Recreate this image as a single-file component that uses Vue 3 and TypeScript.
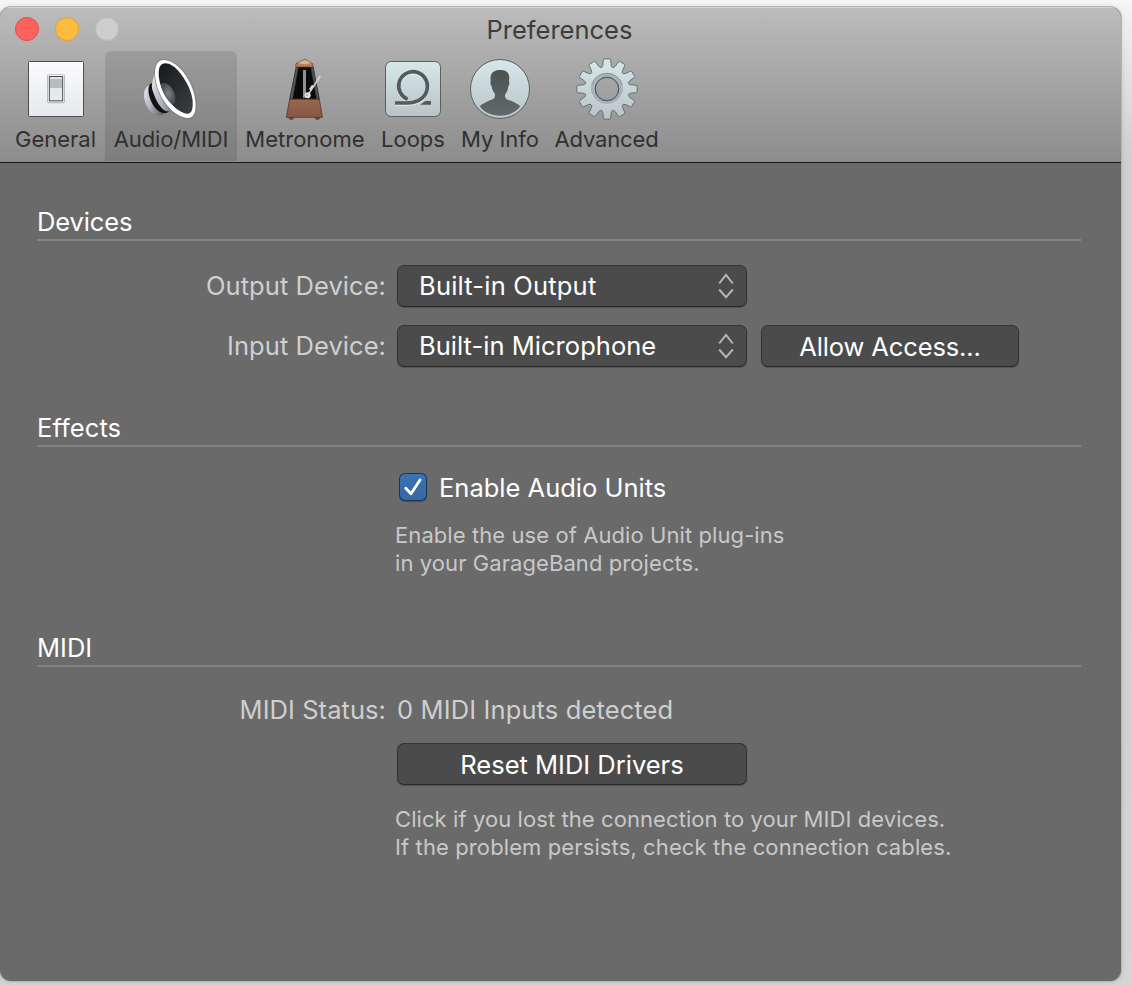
<script setup lang="ts">
import { ref } from 'vue'

interface Tab {
  id: string
  label: string
  width: number
  viewBox: string
}

const tabs: Tab[] = [
  { id: 'general', label: 'General', width: 98, viewBox: '72 168 192 198' },
  { id: 'audio', label: 'Audio/MIDI', width: 132, viewBox: '417 168 192 198' },
  { id: 'metronome', label: 'Metronome', width: 136, viewBox: '114 33 192 198' },
  { id: 'loops', label: 'Loops', width: 79, viewBox: '438 33 192 198' },
  { id: 'info', label: 'My Info', width: 95, viewBox: '54 33 192 198' },
  { id: 'advanced', label: 'Advanced', width: 119, viewBox: '375 33 192 198' },
]
const active = ref('audio')
const audioUnits = ref(true)

// Twelve-tooth gear outline around a centre point.
function gearPath(cx: number, cy: number): string {
  const pts: string[] = []
  for (let i = 0; i < 12; i++) {
    const a = (i * Math.PI) / 6
    for (const [r, w] of [[67, -0.23], [73, -0.17], [88, -0.128], [91, -0.1], [91, 0.1], [88, 0.128], [73, 0.17], [67, 0.23]]) {
      pts.push(`${(cx + r * Math.sin(a + w)).toFixed(1)} ${(cy - r * Math.cos(a + w)).toFixed(1)}`)
    }
  }
  return `M${pts.join('L')}Z`
}
const gear = gearPath(471, 132) + 'M506 132A35 35 0 1 0 436 132A35 35 0 1 0 506 132Z'
</script>

<template>
  <div class="desktop">
    <main class="window">
      <header class="header">
        <div class="titlebar">
          <span class="light red"></span>
          <span class="light yellow"></span>
          <span class="light off"></span>
          <h1 class="title">Preferences</h1>
        </div>
        <nav class="toolbar">
          <button
            v-for="t in tabs"
            :key="t.id"
            class="tab"
            :class="{ selected: active === t.id }"
            :style="{ width: t.width + 'px' }"
            @click="active = t.id"
          >
            <svg class="icon" :viewBox="t.viewBox" width="64" height="66">
              <defs>
                <linearGradient id="plate" x1="0" y1="0" x2="0" y2="1"><stop offset="0" stop-color="#fbfbfd" /><stop offset="1" stop-color="#e5e8ec" /></linearGradient>
                <linearGradient id="pale" x1="0" y1="0" x2="0" y2="1"><stop offset="0" stop-color="#d7e7ea" /><stop offset="1" stop-color="#b9c4c6" /></linearGradient>
                <linearGradient id="slate" x1="0" y1="0" x2="0" y2="1"><stop offset="0" stop-color="#4a5252" /><stop offset="1" stop-color="#606a6a" /></linearGradient>
                <linearGradient id="metal" x1="0" y1="0" x2="1" y2="0.7"><stop offset="0" stop-color="#e9e9f2" /><stop offset="0.5" stop-color="#b5b5c1" /><stop offset="1" stop-color="#666671" /></linearGradient>
                <linearGradient id="cone" x1="0" y1="0" x2="1" y2="1"><stop offset="0" stop-color="#18191b" /><stop offset="1" stop-color="#3b3e41" /></linearGradient>
                <radialGradient id="dome"><stop offset="0" stop-color="#7b8088" /><stop offset="1" stop-color="#4a4e54" /></radialGradient>
                <linearGradient id="wood" x1="0" y1="0" x2="0" y2="1"><stop offset="0" stop-color="#98674e" /><stop offset="1" stop-color="#865640" /></linearGradient>
              </defs>
              <template v-if="t.id === 'general'">
                <rect x="85.5" y="184.5" width="165" height="165" rx="3" fill="url(#plate)" stroke="#4d4e50" stroke-width="3" />
                <rect x="141" y="223" width="54" height="87" rx="5" fill="#b9bcbf" />
                <rect x="144" y="225" width="48" height="81" rx="3" fill="#fafafb" />
                <rect x="148" y="229.5" width="40" height="73" fill="#e4eaed" stroke="#45494b" stroke-width="3" />
                <rect x="150" y="231" width="36" height="33" fill="#b7bdbf" />
                <rect x="150" y="231" width="36" height="6" fill="#dfe3e5" />
              </template>
              <template v-else-if="t.id === 'audio'">
                <path d="M449 255C435 262 429 276 433 298C438 323 455 345 474 347C483 347 490 343 498 339Z" fill="url(#metal)" />
                <path d="M450 253C442 263 444 288 457 311C467 328 480 341 499 339L511 333L470 240Z" fill="#111214" />
                <path d="M465 215C459 242 451 253 459 275C468 302 480 324 498 334C515 332 533 344 555 353Z" fill="url(#metal)" />
                <path d="M490 178C471 178 462 197 463 224C465 255 477 289 499 318C519 343 545 358 567 357C585 356 592 333 589 303C586 273 572 240 550 212C530 188 508 178 490 178Z" fill="#7b7b7d" />
                <path d="M491 180C473 180 464 197 465 224C467 255 479 288 501 316C521 341 546 355 566 354C583 353 589 332 586 303C583 274 570 242 548 214C528 190 508 180 491 180Z" fill="#fff" />
                <path d="M496 190C482 190 475 202 476 225C478 254 490 282 510 307C528 329 548 342 564 341C576 340 579 325 578 303C575 276 562 247 542 221C524 199 509 190 496 190Z" fill="url(#cone)" />
                <path d="M483 253C491 243 512 253 521 275C530 294 526 310 518 313C500 301 486 276 483 253Z" fill="url(#dome)" />
              </template>
              <template v-else-if="t.id === 'metronome'">
                <path d="M160 216h16v5q-8 7-14 0ZM240 216h16l-2 5q-7 7-14 0Z" fill="#6d4230" />
                <path d="M184 65H234L253 163H164Z" fill="#46494a" stroke="#282a2b" stroke-width="2" />
                <path d="M190 67H227L244 161H173Z" fill="#080909" />
                <path d="M184 65L190 67L173 161H165ZM234 65L228 67L245 161H252Z" fill="#56595a" stroke="#252728" stroke-width="1.5" />
                <path d="M183 56L209 43L233 56L234 66H182Z" fill="#bb7c59" stroke="#57372a" stroke-width="2" />
                <path d="M188 54L209 44L229 54Q209 61 188 54Z" fill="#dfb48d" />
                <path d="M204 75H213V158H204Z" fill="#93938f" />
                <path d="M164 163H253L262 217H154Z" fill="url(#wood)" stroke="#56382b" stroke-width="2.5" />
                <path d="M218 151L256 93" stroke="#d6d7d7" stroke-width="4.5" />
                <path d="M231 119L237 123L229 137L222 132Z" fill="#d8d9d9" />
                <circle cx="218" cy="151" r="9" fill="#e4e4e4" />
                <circle cx="216" cy="150" r="4" fill="#b8b8b8" />
              </template>
              <template v-else-if="t.id === 'loops'">
                <rect x="451.5" y="49.5" width="165" height="165" rx="17" fill="url(#pale)" stroke="#566164" stroke-width="3" />
                <g fill="none" stroke-width="11">
                  <path d="M480 174H515C555 174 577 151 577 125A43 43 0 1 0 518 163" stroke="#e4eeee" transform="translate(0 3)" />
                  <path d="M480 174H515C555 174 577 151 577 125A43 43 0 1 0 518 163" stroke="#535b5b" />
                </g>
                <path d="M555 179L571 168H588V179Z" fill="#535b5b" />
              </template>
              <template v-else-if="t.id === 'info'">
                <circle cx="150" cy="132" r="88.5" fill="url(#pale)" stroke="#566164" stroke-width="3" />
                <path d="M89 184C99 174 116 168 128 163C135 160 135 154 135 147C128 139 125 129 125 124C121 120 121 113 122 107C119 85 130 75 151 75C171 75 181 86 177 107C179 115 178 121 175 124C174 134 170 143 165 149C165 156 166 161 173 164C187 169 202 174 211 184C197 203 176 212 150 212C124 212 103 203 89 184Z" fill="url(#slate)" />
              </template>
              <template v-else>
                <path :d="gear" fill="url(#pale)" fill-rule="evenodd" stroke="#59656a" stroke-width="2.6" stroke-linejoin="round" />
                <circle cx="471" cy="132" r="42.5" fill="none" stroke="#a8b3b5" stroke-width="11" />
                <path d="M425 119A48 48 0 0 1 517 119" fill="none" stroke="#798486" stroke-width="2" />
                <path d="M424 144A49 49 0 0 0 518 144" fill="none" stroke="#dce4e5" stroke-width="2" />
                <circle cx="471" cy="132" r="35.5" fill="none" stroke="#4e5759" stroke-width="3" />
              </template>
            </svg>
            <span class="tab-label" :class="'l-' + t.id">{{ t.label }}</span>
          </button>
        </nav>
      </header>

      <div class="content">
        <section class="section devices">
          <h2><span class="t-devices">Devices</span></h2>
          <div class="row">
            <span class="label">Output Device:</span>
            <button class="control popup">
              <span class="t-output">Built-in Output</span>
              <svg class="arrows" width="16" height="26" viewBox="0 0 16 26"><path d="M1.2 10.5L8 1.8L14.8 10.5M1.2 16.5L8 24.2L14.8 16.5" /></svg>
            </button>
          </div>
          <div class="row">
            <span class="label">Input Device:</span>
            <button class="control popup">
              <span class="t-mic">Built-in Microphone</span>
              <svg class="arrows" width="16" height="26" viewBox="0 0 16 26"><path d="M1.2 10.5L8 1.8L14.8 10.5M1.2 16.5L8 24.2L14.8 16.5" /></svg>
            </button>
            <button class="control push allow"><span class="t-allow">Allow Access...</span></button>
          </div>
        </section>

        <section class="section effects">
          <h2><span class="t-effects">Effects</span></h2>
          <div class="check-row" @click="audioUnits = !audioUnits">
            <span class="checkbox">
              <svg v-if="audioUnits" width="28" height="28" viewBox="0 0 28 28"><path d="M6.8 15.3L12 20.8L21 7" /></svg>
            </span>
            <span>Enable Audio Units</span>
          </div>
          <p class="help">Enable the use of Audio Unit plug-ins<br />in your GarageBand projects.</p>
        </section>

        <section class="section midi">
          <h2>MIDI</h2>
          <div class="status">
            <span class="label">MIDI Status:</span>
            <span class="value">0 MIDI Inputs detected</span>
          </div>
          <button class="control push reset">Reset MIDI Drivers</button>
          <p class="help">Click if you lost the connection to your MIDI devices.<br /><span class="t-cables">If the problem persists, check the connection cables.</span></p>
        </section>
      </div>
    </main>
  </div>
</template>

<style>
html, body { margin: 0; background: #d9d9d9; }
</style>

<style scoped>
.desktop {
  width: 1132px;
  height: 985px;
  box-sizing: border-box;
  padding-top: 7px;
  overflow: hidden;
  background: linear-gradient(180deg, #f6f6f6 0, #ededed 30px, #d0d0d0 150px, #cfcfcf 500px, #d4d4d4 100%);
  font-family: Inter, "Liberation Sans", sans-serif;
}
.window {
  width: 1121px;
  height: 974px;
  border-radius: 11px;
  overflow: hidden;
  background: #6a6a6a;
  box-shadow: 0 0 0 1px #b3b3b3, 0 0 6px rgba(0, 0, 0, 0.12);
}
button { margin: 0; padding: 0; border: 0; font: inherit; color: inherit; background: none; }
.header {
  height: 156px;
  box-sizing: border-box;
  border-bottom: 1px solid #161616;
  background: linear-gradient(#bcbcbc, #8c8c8c);
  box-shadow: inset 0 1px #d6d6d6;
}
.titlebar {
  display: grid;
  grid-template-columns: 24px 24px 24px 1fr;
  column-gap: 16px;
  height: 44px;
  padding-left: 15px;
  align-items: center;
}
.light { width: 24px; height: 24px; box-sizing: border-box; border-radius: 50%; border: 1px solid; }
.red { background: #fe625d; border-color: #e24b47; }
.yellow { background: #fdbc40; border-color: #e1a034; }
.off { background: #cecece; border-color: #b9b9b9; }
.title { margin: 0; padding: 1px 0 0 351.5px; font-size: 25.5px; line-height: 32px; font-weight: 400; color: #3d3d3d; white-space: nowrap; }
.toolbar { display: flex; padding-left: 7px; }
.tab {
  height: 110px;
  flex: none;
  display: flex;
  flex-direction: column;
  align-items: center;
  padding-top: 5px;
  border-radius: 6px 6px 0 0;
}
.tab.selected { background: linear-gradient(#9c9c9c, #7d7d7d); }
.icon { display: block; flex: none; }
.tab-label { font-size: 22px; line-height: 28px; margin-top: 3px; color: #303030; white-space: nowrap; }
.l-general { margin-right: 1px; }
.l-audio { letter-spacing: -0.1px; }
.l-loops, .l-info { margin-left: 1px; }
.l-advanced { letter-spacing: -0.15px; }
.content { padding: 46px 40px 0 37px; color: #fff; font-size: 25.5px; }
h2 {
  height: 30px;
  margin: 0;
  border-bottom: 2px solid #848484;
  font-size: 25.5px;
  line-height: 25px;
  font-weight: 400;
}
.devices { height: 206px; }
.effects { height: 220px; }
.row { display: flex; align-items: center; height: 42px; margin-top: 18px; }
h2 + .row { margin-top: 24px; }
.label { width: 349px; margin-right: 11px; text-align: right; color: #cfcfcf; white-space: nowrap; letter-spacing: 0.06px; }
.row .label { padding-bottom: 2px; }
.control {
  height: 42px;
  box-sizing: border-box;
  border: 1px solid #353535;
  border-bottom-color: #292929;
  border-radius: 7px;
  background: #4b4b4b;
  box-shadow: 0 1px 1px rgba(0, 0, 0, 0.22);
  color: #fff;
  white-space: nowrap;
}
.popup { width: 350px; padding: 0 12px 0 21px; display: flex; align-items: center; justify-content: space-between; }
.popup span { padding-bottom: 2px; }
.arrows path { fill: none; stroke: #b5b5b5; stroke-width: 2; }
.push { display: flex; justify-content: center; align-items: center; }
.allow { width: 258px; margin-left: 14px; }
.reset { width: 350px; margin: 17px 0 0 360px; }
.t-devices { letter-spacing: -0.12px; }
.t-effects { letter-spacing: 0.1px; }
.t-output { letter-spacing: 0.2px; }
.t-mic { letter-spacing: 0.03px; }
.t-allow { letter-spacing: -0.12px; }
.check-row { display: flex; align-items: center; height: 28px; padding: 26px 0 0 362px; gap: 12px; }
.checkbox {
  width: 28px;
  height: 28px;
  box-sizing: border-box;
  border-radius: 6px;
  background: linear-gradient(#3b73b3, #3568a4);
  box-shadow: inset 0 0 0 1px #1d3451, 0 1px 1px rgba(0, 0, 0, 0.25);
}
.checkbox svg { display: block; }
.checkbox path { fill: none; stroke: #fff; stroke-width: 2.8; stroke-linecap: round; stroke-linejoin: round; }
.help { margin: 20px 0 0 358px; font-size: 22px; line-height: 28px; color: #c8c8c8; white-space: nowrap; letter-spacing: 0.08px; }
.t-cables { letter-spacing: 0.11px; }
.status { display: flex; height: 32px; line-height: 32px; margin-top: 27px; }
.value { color: #cfcfcf; letter-spacing: 0.13px; }
</style>
